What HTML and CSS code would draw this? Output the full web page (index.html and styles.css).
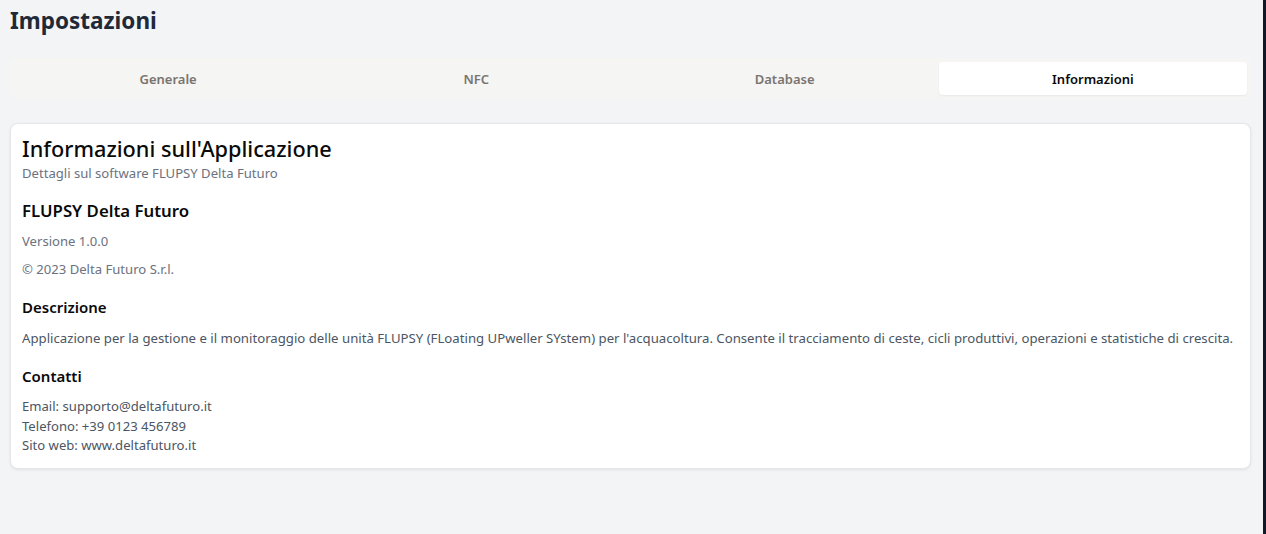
FILE: index.html
```html
<!DOCTYPE html>
<html lang="it">
<head>
<meta charset="utf-8">
<title>Impostazioni</title>
<link rel="stylesheet" href="styles.css">
</head>
<body>
<div class="frame">
  <main class="page">
    <h1 class="page-title">Impostazioni</h1>
    <div class="tabs">
      <div class="tab">Generale</div>
      <div class="tab">NFC</div>
      <div class="tab">Database</div>
      <div class="tab active">Informazioni</div>
    </div>
    <section class="card">
      <header class="card-header">
        <h2 class="card-title">Informazioni sull'Applicazione</h2>
        <p class="card-desc">Dettagli sul software FLUPSY Delta Futuro</p>
      </header>
      <div class="card-body">
        <h3 class="app-name">FLUPSY Delta Futuro</h3>
        <p class="meta">Versione 1.0.0</p>
        <p class="meta">© 2023 Delta Futuro S.r.l.</p>
        <h4 class="section-title">Descrizione</h4>
        <p class="text">Applicazione per la gestione e il monitoraggio delle unità FLUPSY (FLoating UPweller SYstem) per l'acquacoltura. Consente il tracciamento di ceste, cicli produttivi, operazioni e statistiche di crescita.</p>
        <h4 class="section-title">Contatti</h4>
        <div class="contacts">
          <p>Email: supporto@deltafuturo.it</p>
          <p>Telefono: +39 0123 456789</p>
          <p>Sito web: www.deltafuturo.it</p>
        </div>
      </div>
    </section>
  </main>
  <div class="edge"></div>
</div>
</body>
</html>
```
FILE: styles.css
```css
* { box-sizing: border-box; }
html, body { margin: 0; padding: 0; }
body {
  background: #f3f4f6;
  font-family: "Noto Sans", "Open Sans", sans-serif;
  color: #111827;
  height: 534px;
  overflow: hidden;
}
.frame {
  display: flex;
  height: 534px;
}
.page {
  flex: 1;
  padding: 5px 12px 0 10px;
}
.edge {
  width: 3px;
  background: #111827;
}
.page-title {
  margin: 0;
  font-size: 22.5px;
  font-weight: 700;
  line-height: 32px;
  color: #1f2937;
}
.tabs {
  margin-top: 21px;
  display: grid;
  grid-template-columns: repeat(4, 1fr);
  padding: 4px;
  background: #f5f5f4;
  border-radius: 6px;
  height: 41px;
}
.tab {
  display: flex;
  align-items: center;
  justify-content: center;
  font-size: 13px;
  font-weight: 600;
  color: #7a746f;
  border-radius: 4px;
}
.tab.active {
  background: #fff;
  color: #0c0a09;
  box-shadow: 0 1px 2px rgba(0,0,0,0.05);
}
.card {
  margin-top: 24px;
  background: #fff;
  border: 1px solid #e5e7eb;
  border-radius: 8px;
  box-shadow: 0 1px 3px rgba(0,0,0,0.08);
  padding: 10px 12px 12px 11px;
}
.card-title {
  margin: 0;
  font-size: 21.7px;
  font-weight: 500;
  line-height: 30px;
  color: #0a0a0a;
}
.card-desc {
  margin: 0;
  font-size: 13.1px;
  line-height: 18px;
  color: #6b7280;
}
.card-body { padding-top: 17px; }
.app-name {
  margin: 0;
  font-size: 16.8px;
  font-weight: 600;
  line-height: 24px;
  color: #0a0a0a;
}
.meta {
  margin: 8px 0 0;
  font-size: 13.1px;
  line-height: 20px;
  color: #6b7280;
}
.section-title {
  margin: 17px 0 0;
  font-size: 15px;
  font-weight: 600;
  line-height: 22px;
  color: #0a0a0a;
}
.text {
  margin: 10px 0 0;
  font-size: 13.2px;
  line-height: 20px;
  color: #4b5563;
}
.contacts { margin-top: 10px; }
.contacts p {
  margin: 0;
  font-size: 13.1px;
  line-height: 19.5px;
  color: #4b5563;
}
```
